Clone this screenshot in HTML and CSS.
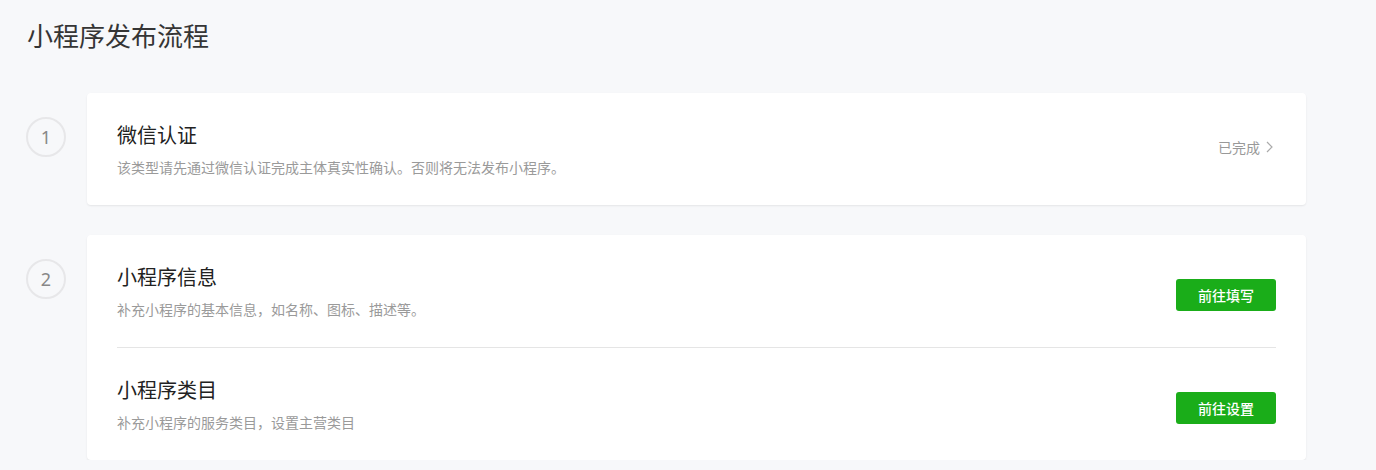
FILE: index.html
```html
<!DOCTYPE html>
<html lang="zh-CN">
<head>
<meta charset="utf-8">
<title>小程序发布流程</title>
<link rel="stylesheet" href="styles.css">
</head>
<body>
<div class="page">
  <h1 class="page-title">小程序发布流程</h1>
  <div class="steps">
    <div class="step">
      <div class="step-num">1</div>
      <div class="card">
        <div class="row">
          <div class="row-text">
            <div class="row-title">微信认证</div>
            <div class="row-desc">该类型请先通过微信认证完成主体真实性确认。否则将无法发布小程序。</div>
          </div>
          <a class="status">已完成<svg class="chev" width="7" height="12" viewBox="0 0 7 12"><path d="M1 1l5 5-5 5" fill="none" stroke="#aaa" stroke-width="1.2"/></svg></a>
        </div>
      </div>
    </div>
    <div class="step">
      <div class="step-num">2</div>
      <div class="card">
        <div class="row">
          <div class="row-text">
            <div class="row-title">小程序信息</div>
            <div class="row-desc">补充小程序的基本信息，如名称、图标、描述等。</div>
          </div>
          <button class="btn">前往填写</button>
        </div>
        <div class="row">
          <div class="row-text">
            <div class="row-title">小程序类目</div>
            <div class="row-desc">补充小程序的服务类目，设置主营类目</div>
          </div>
          <button class="btn">前往设置</button>
        </div>
      </div>
    </div>
  </div>
</div>
</body>
</html>
```

FILE: styles.css
```css
* { box-sizing: border-box; }
html, body {
  margin: 0;
  padding: 0;
  background: #f7f8fa;
  font-family: "Noto Sans CJK SC", "Noto Sans", sans-serif;
  color: #333;
}
.page {
  padding: 16px 70px 0 26px;
}
.page-title {
  margin: 0 0 0 1px;
  font-size: 26px;
  font-weight: 400;
  line-height: 38px;
  color: #353535;
}
.steps {
  display: flex;
  flex-direction: column;
  gap: 30px;
  margin-top: 39px;
}
.step {
  display: flex;
  align-items: flex-start;
  gap: 21px;
}
.step-num {
  flex: none;
  width: 40px;
  height: 40px;
  margin-top: 24px;
  border: 2px solid #e7e7e9;
  border-radius: 50%;
  display: flex;
  align-items: center;
  justify-content: center;
  font-family: "Noto Sans", sans-serif;
  font-size: 18px;
  color: #888;
}
.card {
  flex: 1;
  background: #fff;
  border-radius: 4px;
  box-shadow: 0 1px 2px rgba(0,0,0,0.08);
  padding: 0 30px;
}
.row {
  height: 112px;
  display: flex;
  align-items: center;
  justify-content: space-between;
}
.row + .row {
  border-top: 1px solid #e5e5e5;
  height: 113px;
}
.row-text {
  display: flex;
  flex-direction: column;
}
.row-title {
  font-size: 20px;
  line-height: 26px;
  color: #222;
}
.row-desc {
  margin-top: 9px;
  font-size: 14px;
  line-height: 20px;
  color: #9a9a9a;
}
.status {
  display: flex;
  align-items: center;
  gap: 6px;
  font-size: 14px;
  color: #999;
  margin: -4px 3px 0 0;
}
.chev { display: block; }
.btn {
  width: 100px;
  height: 32px;
  border: none;
  border-radius: 3px;
  background: #1aad19;
  color: #fff;
  font-family: "Noto Sans CJK SC", sans-serif;
  font-size: 14px;
  font-weight: 500;
  padding: 0;
  margin-top: 8px;
}
```
